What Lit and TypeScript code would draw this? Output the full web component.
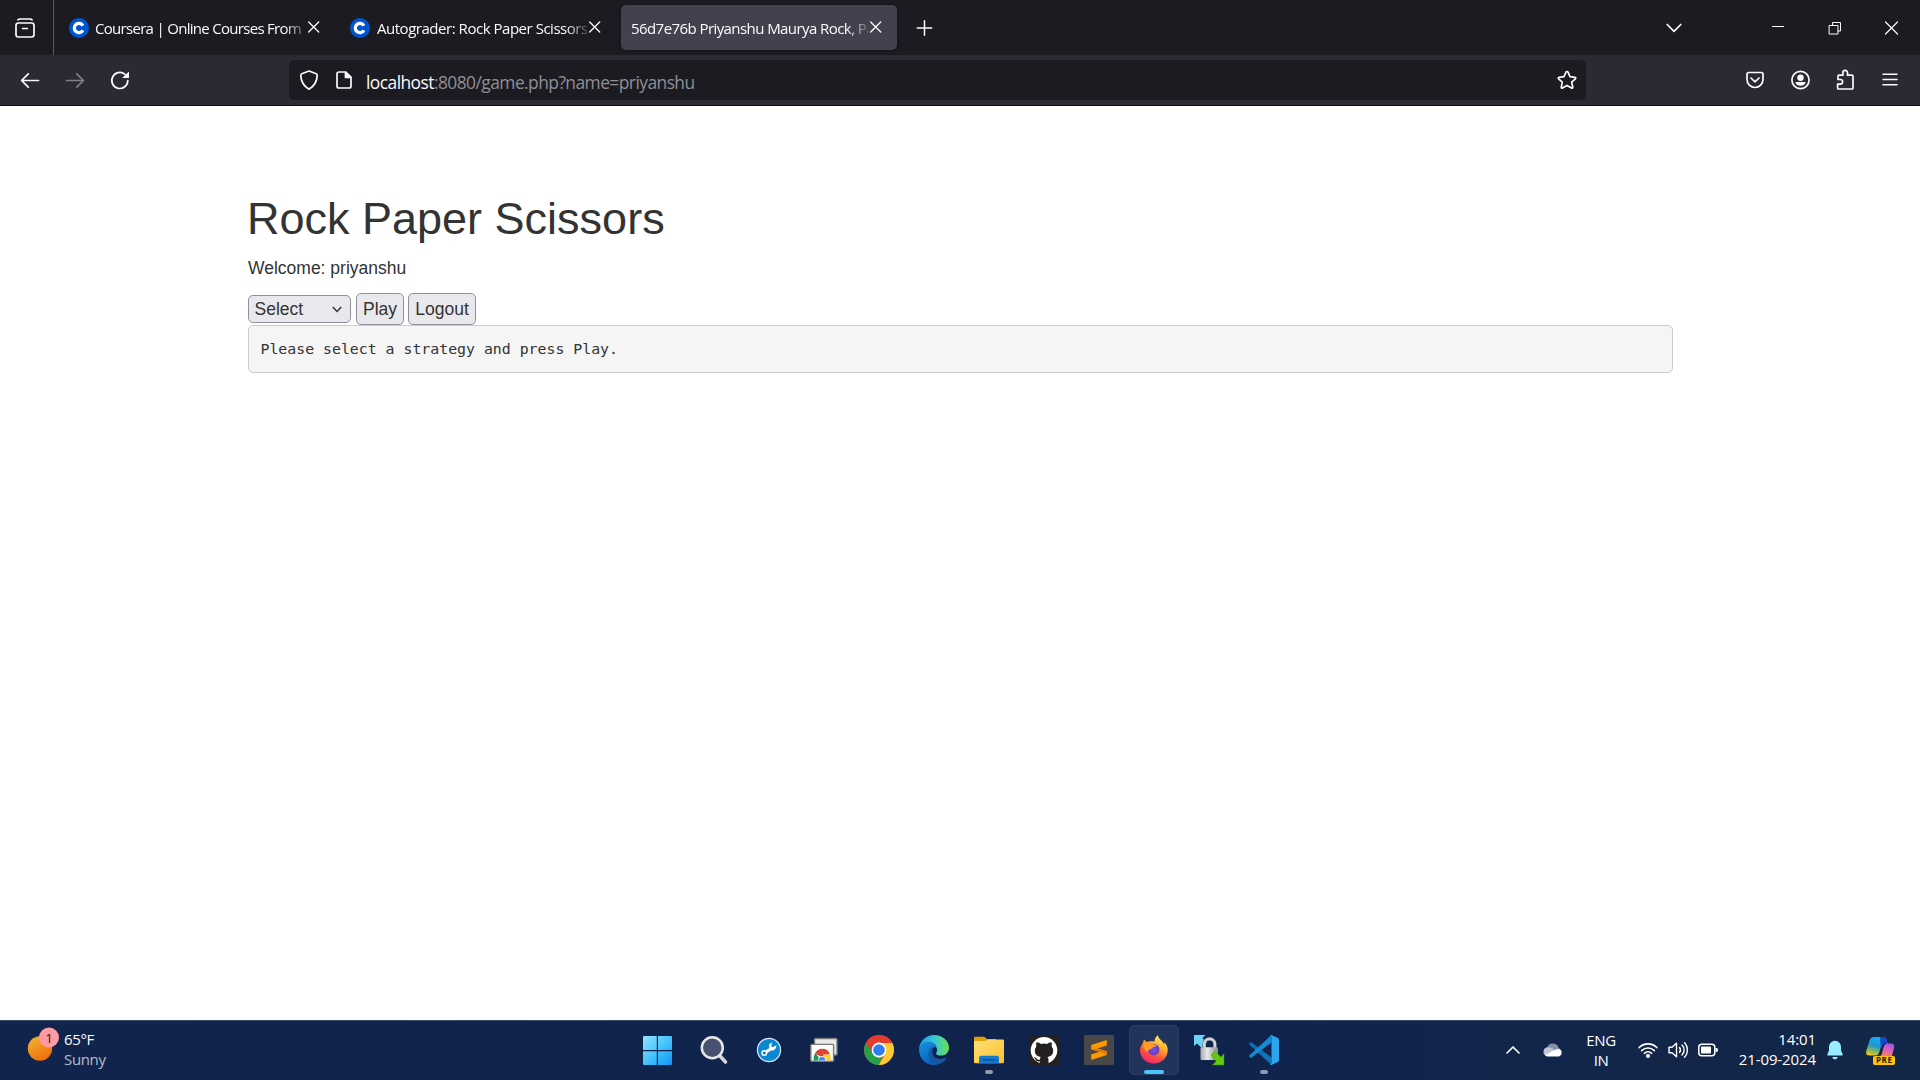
import { LitElement, html, css, svg } from "lit";
import { customElement, property } from "lit/decorators.js";
import { classMap } from "lit/directives/class-map.js";

const line = "#fbfbfe";

/* ---------- small line icons (20 x 20 unless noted) ---------- */
const icons: Record<string, { w: number; h: number; d: unknown }> = {
  view: { w: 20, h: 20, d: svg`<path d="M3 1.8Q3.6 1 5 1H15Q16.400 1 17 1.800" /><rect x="1" y="5" width="18" height="14" rx="2.400" /><path d="M7.600 10.500h4.800" />` },
  close: { w: 12, h: 12, d: svg`<path stroke-width="1.300" d="M.7 1l10 10M10.700 1L.7 11" />` },
  plus: { w: 16, h: 16, d: svg`<path stroke-width="1.500" d="M7.500 .8v14.400M.3 8h14.400" />` },
  down: { w: 16, h: 10, d: svg`<path d="M1.200 1.500L8 8.300l6.800-6.800" />` },
  min: { w: 14, h: 14, d: svg`<path stroke-width="1" stroke-linecap="butt" d="M1 5.500h12" />` },
  restore: { w: 14, h: 14, d: svg`<path stroke-width="1" stroke-linejoin="miter" d="M1.500 4.500h8.500v8.500H1.500zM4.500 4.500V1.500H12.500V10H10" />` },
  winclose: { w: 14, h: 14, d: svg`<path stroke-width="1.200" d="M.5 1l12 12M12.500 1L.5 13" />` },
  back: { w: 20, h: 20, d: svg`<path d="M18.500 9.500H2M8.300 2.800L1.600 9.500l6.700 6.700" />` },
  forward: { w: 20, h: 20, d: svg`<path d="M1.500 9.500H18M11.700 2.800L18.400 9.500l-6.700 6.700" />` },
  reload: { w: 20, h: 20, d: svg`<path d="M17.800 9.500a8 8 0 1 1-2.800-6.100" /><path fill="${line}" stroke="none" d="M19 .5v6.600H12.200z" />` },
  shield: { w: 20, h: 22, d: svg`<path d="M10 2L17.200 4.800Q18.300 5.200 18.200 6.600Q17.900 15.500 10 20.200Q2.100 15.500 1.800 6.600Q1.700 5.200 2.800 4.800Z" />` },
  doc: { w: 18, h: 20, d: svg`<path d="M4 2H10.800L16 7.200V16Q16 18 14 18H4Q2 18 2 16V4Q2 2 4 2z" /><path fill="${line}" d="M10.500 2.500V7.500h5z" />` },
  star: { w: 22, h: 20, d: svg`<path d="M11 1.500q.7 0 1 .7l2 4.500 4.900.6q1.500.3.500 1.500l-3.700 3.300 1 4.900q.2 1.500-1.200.9L11 15.400l-4.500 2.500q-1.400.6-1.200-.9l1-4.900L2.600 8.800q-1-1.200.5-1.500L8 6.700l2-4.500q.3-.7 1-.7z" />` },
  pocket: { w: 20, h: 18, d: svg`<path d="M3.800 1.500H16.200Q18 1.500 18 3.300V8.500a8 8 0 0 1-16 0V3.300Q2 1.500 3.800 1.500z" /><path d="M6 7L10 10.800 14 7" />` },
  account: { w: 20, h: 20, d: svg`<circle cx="10.500" cy="10" r="8.600" /><circle cx="10.500" cy="7.700" r="3.200" fill="${line}" stroke="none" /><path fill="${line}" stroke="none" d="M5.300 11.900H15.700Q15 15.600 10.500 15.700 6 15.600 5.300 11.900z" />` },
  ext: { w: 20, h: 22, d: svg`<path d="M3.500 20H17Q18 20 18 19V7.500Q18 6.200 17 6.200H12.500V3.700a2.300 2.300 0 0 0-4.600 0V6.200H4Q3 6.200 3 7.400V10.500H5.300a2.300 2.300 0 0 1 0 4.600H2.600V19Q2.600 20 3.500 20z" />` },
  menu: { w: 18, h: 14, d: svg`<path stroke-width="1.500" d="M2 1.200h14M2 6.500h14M2 11.800h14" />` },
  up: { w: 14, h: 10, d: svg`<path stroke-width="1.700" d="M1 8L7 2l6 6" />` },
};

const icon = (name: string) => {
  const i = icons[name];
  return html`<svg width=${i.w} height=${i.h} viewBox="0 0 ${i.w} ${i.h}" fill="none" stroke=${line}
    stroke-width="1.700" stroke-linecap="round" stroke-linejoin="round">${i.d}</svg>`;
};

/* ---------- taskbar application icons (30 x 30) ---------- */
const apps: { name: string; state?: string; art: unknown }[] = [
  { name: "start", art: svg`
    <defs><linearGradient id="win" gradientUnits="userSpaceOnUse" x1="0" y1="1" x2="28" y2="30"><stop offset="0" stop-color="#8fe3ff"/><stop offset=".5" stop-color="#45c4fb"/><stop offset="1" stop-color="#0d95f5"/></linearGradient></defs>
    <path fill="url(#win)" d="M0 1H12.800V15H-1V2Q-1 1 0 1zM14 1H27Q28 1 28 2V15H14zM-1 16.200H12.800V30H0Q-1 30-1 29zM14 16.200H28V29Q28 30 27 30H14z"/>` },
  { name: "search", art: svg`
    <path d="M20.500 20.500L26.500 27" stroke="#d5d5d8" stroke-width="3.600" stroke-linecap="round"/>
    <circle cx="13.300" cy="12.700" r="10.500" fill="#46526f" stroke="#e6e6e8" stroke-width="2.500"/>` },
  { name: "tool", art: svg`
    <circle cx="15" cy="15" r="11.600" fill="#0c87d2" stroke="#d9eaf5" stroke-width="1.200"/>
    <path d="M11 17.700L18 13.100" stroke="#fff" stroke-width="3"/>
    <circle cx="10.300" cy="18" r="2.300" fill="#0c87d2" stroke="#fff" stroke-width="1.400"/>
    <path d="M22.300 10.300l-3.500 2-1.600-1.400.8-3.300c-2.400.6-3.600 2.700-2.700 4.800l1.700 3.100c3 .7 5.600-1.700 5.300-5.200z" fill="#fff"/>` },
  { name: "remote", art: svg`
    <rect x="5.500" y="3.500" width="22.500" height="16.500" rx="1" fill="#e9e9e9" stroke="#777" stroke-width="1.400"/>
    <rect x="1.800" y="9.400" width="22.800" height="16.800" rx="1" fill="#fafafa" stroke="#777" stroke-width="1.400"/>
    <path fill="#db4437" d="M6 18.800a8 8 0 0 1 14.800 0L13 22z"/>
    <path fill="#0f9d58" d="M6.300 18.300a8.500 8.500 0 0 0-1.300 7.200h6L9.500 22z"/>
    <path fill="#ffcd40" d="M14 19.300h6.800a8.500 8.500 0 0 1 1 6.200H15z"/>
    <path fill="#fff" d="M8.800 25.500a4.200 4.200 0 1 1 8.400 0z"/><path fill="#4285f4" d="M9.600 25.500a3.400 3.400 0 1 1 6.800 0z"/>` },
  { name: "chrome", art: svg`
    <circle cx="15" cy="15" r="15" fill="#e33b2e"/>
    <path fill="#fcc934" d="M15 8H28.300A15 15 0 0 1 14.800 30L21.200 18.500z"/>
    <path fill="#25a04b" d="M2 7.600L8.800 18.400Q11 22 15 22q2 0 3.800-1L14.800 30A15 15 0 0 1 2 7.600z"/>
    <path fill="#e33b2e" d="M2 7.600A15 15 0 0 1 28.300 8H15L8.500 18z"/>
    <circle cx="15" cy="15" r="7.400" fill="#fff"/><circle cx="15" cy="15" r="5.800" fill="#2f7df1"/>` },
  { name: "edge", art: svg`
    <defs>
      <linearGradient id="ea" x1="0" y1=".3" x2="1" y2=".3"><stop offset="0" stop-color="#2198dc"/><stop offset=".5" stop-color="#36c4dc"/><stop offset="1" stop-color="#6be04e"/></linearGradient>
      <linearGradient id="eb" x1="0" y1="0" x2=".6" y2="1"><stop offset="0" stop-color="#1696e2"/><stop offset="1" stop-color="#0a5cb4"/></linearGradient>
    </defs>
    <path fill="url(#ea)" d="M0 13.500C1 5.500 7.200 0 15 0c8.500 0 15 6 15 12.700 0 4.800-3.500 7.900-7.900 7.900-3.500 0-5.400-1.200-4.900-2.600 1.300-1.700 1.500-4.300-.7-7C12 6 2 8 0 13.500z"/>
    <path fill="url(#eb)" d="M0 14C.8 9.200 4.700 6.700 9.400 6.700c4.300 0 7.400 2.200 8.300 5.200C14.500 11.500 12 14 12 17.500c0 5.500 3 9.500 7 11.900C9 32 0 25.300 0 14z"/>
    <path fill="#1558a4" d="M14.500 12.200C10.600 13 9 16.300 9.600 20c.8 5 4.700 9.300 9.400 9.300 4-.9 7-3.100 8.700-6.100.3-.6-.3-.9-.8-.6-6.700 3.400-13.400.6-13.400-5.600 0-2 .4-3.700 1-4.800z"/>` },
  { name: "files", state: "open", art: svg`
    <defs><linearGradient id="fo" x1="0" y1="0" x2="1" y2="1"><stop offset="0" stop-color="#ffe07a"/><stop offset="1" stop-color="#fdbf2c"/></linearGradient></defs>
    <path fill="#e0a00c" d="M1 1.800H10.200L13 4H22V12H0V2.800Q0 1.800 1 1.800z"/>
    <path fill="url(#fo)" d="M0 6H10.500Q12 6 13 5.200T15 4.400H29Q30 4.400 30 5.400V27Q30 28.300 28.700 28.300H1.300Q0 28.300 0 27z"/>
    <path fill="#1478ce" d="M5 28.300V23Q5 20.700 7.300 20.700H22.700Q25 20.700 25 23V28.300z"/><path d="M9 24.800h12" stroke="#0b4b8c" stroke-width="1.300" stroke-linecap="round"/>` },
  { name: "github", art: svg`
    <path fill="#24201f" d="M0 0H30V30H0z"/><circle cx="15" cy="15.300" r="13.300" fill="#fff"/>
    <path fill="#24201f" d="M7.500 7.300Q10 7.200 12 8.900q3-.7 6 0Q20 7.200 22.500 7.300q.8 2.300.2 4.100 1.500 1.700 1.500 4.300 0 5.200-5.700 6.300 1 1.100 1 3V29.500H10.700V26.300Q7.600 27 6.300 24.200 5.500 22.800 4.600 22.300 6 21.700 7.200 23.200 8.800 25.500 10.900 24.500 11 22.800 11.700 22 5.800 21 5.800 15.700 5.800 13 7.300 11.400 6.700 9.500 7.500 7.300z"/>` },
  { name: "sublime", art: svg`
    <rect width="30" height="30" rx="1.500" fill="#484848"/>
    <path fill="#ff9800" d="M7.200 10.100L22.800 5V10.500L13.500 13.400 22.800 16.200V20L7.200 25V19.500L15.600 16.800 7.200 14.500z"/><path fill="#df7b05" d="M7.200 14.300L15.600 16.800 22.800 19.600 22.500 16.100 13.500 13.400z"/>` },
  { name: "firefox", state: "active", art: svg`
    <defs>
      <linearGradient id="fa" x1=".8" y1="0" x2=".3" y2="1"><stop offset="0" stop-color="#fff36a"/><stop offset=".35" stop-color="#ffb52d"/><stop offset=".68" stop-color="#ff533e"/><stop offset="1" stop-color="#e92474"/></linearGradient>
      <radialGradient id="fp"><stop offset="0" stop-color="#7351e6"/><stop offset="1" stop-color="#6a3bbd"/></radialGradient>
    </defs>
    <path fill="url(#fa)" d="M1 16C1 12.500 2.600 9.500 4 8 4 6.500 4.600 5.200 5.500 4.500 6 6 7 7 8 7.100 9.500 6 12 6.200 15.500 6.500 15.500 4 17 1.300 19 .3 19.300 3 21 4.300 23 6.300 24 7.200 24.500 8.500 25 9.700 25.500 8.900 25.300 7.900 24.900 6.900 28 9.500 29 12.400 28.700 16 28.100 23.500 22 28.500 15 28.500S1.600 24 1 16z"/>
    <circle cx="14.700" cy="14.600" r="5.800" fill="url(#fp)"/>
    <path fill="#ff9a29" d="M4.300 9.300Q9 6 12.600 7.800L14.600 9.600 18 9.900Q16.700 11.900 13.500 12.400 12.900 13.700 11 14.300 8.700 15 9.100 17.200 4.300 15.500 4.300 9.300z"/>` },
  { name: "winscp", art: svg`
    <path fill="#6fd3f5" d="M0 0H11.500L8.400 3.100 13 7.600 7.600 13 3.100 8.400 0 11z"/>
    <path d="M10.300 13V9.200a5.300 5.300 0 0 1 10.600 0V13" fill="none" stroke="#555e6c" stroke-width="3.800"/>
    <path d="M10.300 13V9.200a5.300 5.300 0 0 1 10.600 0V13" fill="none" stroke="#d5d6d8" stroke-width="2.600"/>
    <defs><linearGradient id="lk"><stop offset="0" stop-color="#a8aaad"/><stop offset=".4" stop-color="#e9e9e9"/><stop offset="1" stop-color="#85878a"/></linearGradient></defs>
    <rect x="6.500" y="12.300" width="17.500" height="12.700" rx="1.200" fill="url(#lk)"/>
    <path fill="#63c90d" stroke="#3a9208" stroke-width=".5" d="M17 20L21 16 26.800 22 30 18.800V30H18.500L22 26.500z"/>` },
  { name: "vscode", state: "open", art: svg`
    <path fill="#0d72b9" d="M2.600 7.400L22.500 22.500V30L.5 9.800Q-.3 9 .5 8.300L1.300 7.500Q2 7 2.600 7.400z"/>
    <path fill="#168bd0" d="M2.600 22.600L22.500 7.500V0L.5 20.200Q-.3 21 .5 21.700L1.300 22.500Q2 23 2.600 22.600z"/>
    <path fill="#2ba6ef" d="M22.400 0L28.800 3Q30 3.700 30 5V25Q30 26.300 28.800 27L22.400 30Q21.500 30 20.800 29.200 22.500 29.500 22.500 27.800V2.200Q22.500.5 20.800.8 21.500 0 22.400 0z"/>` },
];

@customElement("browser-tab")
class BrowserTab extends LitElement {
  @property() label = "";
  @property({ type: Boolean }) favicon = false;
  @property({ type: Boolean, reflect: true }) active = false;
  @property({ type: Boolean, reflect: true }) tight = false;
  static styles = css`
    :host { display: flex; box-sizing: border-box; width: 276px; height: 45px; padding: 0 14px 0 10px; align-items: center; border-radius: 5px; color: #fbfbfe; font: 15px/20px "Open Sans", sans-serif; letter-spacing: -0.47px; }
    :host([active]) { background: #42414d; box-shadow: 0 0 4px rgba(0, 0, 0, 0.4); letter-spacing: -0.57px; }
    :host([tight]) { letter-spacing: -0.7px; }
    svg { display: block; flex: none; }
    .fav { margin-right: 7px; }
    :host([tight]) .fav { margin-right: 6px; }
    .label { flex: 1; overflow: hidden; white-space: nowrap; padding-top: 1px; mask-image: linear-gradient(90deg, #000 calc(100% - 22px), transparent calc(100% + 6px)); }
    .x { margin: 0 0 1px 2px; padding-right: 1px; }
  `;
  render() {
    return html`
      ${this.favicon ? html`<svg class="fav" width="20" height="20" viewBox="0 0 20 20"><circle cx="10" cy="10" r="10" fill="#0056d2" /><path d="M13.900 12.300A4.600 4.600 0 1 1 13.900 7.700" fill="none" stroke="#fff" stroke-width="3.300" /></svg>` : ""}
      <span class="label">${this.label}</span>
      <span class="x">${icon("close")}</span>`;
  }
}

@customElement("app-root")
class AppRoot extends LitElement {
  static styles = css`
    :host { display: flex; flex-direction: column; width: 1920px; height: 1080px; overflow: hidden; background: #fff; font-family: "Open Sans", sans-serif; }
    * { box-sizing: border-box; }
    svg { display: block; flex: none; overflow: visible; }

    .tabs { display: flex; align-items: center; height: 55px; flex: none; background: #1c1b22; }
    .view { display: flex; width: 54px; height: 55px; padding: 18px 0 0 15px; border-right: 1px solid #5b5a61; margin-right: 5px; }
    .strip { display: flex; gap: 5px; margin-right: 20px; }
    .grow { flex: 1; }
    .wm { display: flex; align-items: center; padding-right: 21px; }
    .wm .list { margin-right: 89px; }
    .wm .mid { margin: 0 43px; }

    .bar { display: flex; align-items: center; height: 51px; flex: none; background: #2b2a33; border-bottom: 1px solid #0c0c0d; }
    .nav { display: flex; gap: 25px; padding: 1px 0 0 20px; width: 289px; }
    .dim { opacity: 0.4; }
    .url { display: flex; align-items: center; width: 1297px; height: 40px; padding: 0 8px 0 10px; border-radius: 5px; background: #1c1b22; }
    .url .doc { margin: 0 13px 0 16px; }
    .addr { flex: 1; padding-top: 3px; font-size: 17.400px; line-height: 24px; letter-spacing: -0.55px; color: #8f8f94; white-space: nowrap; }
    .addr b { font-weight: 400; color: #fbfbfe; }
    .tools { display: flex; flex: 1; align-items: center; justify-content: flex-end; gap: 25px; padding-right: 21px; }
    .tools .ext { margin-right: 1px; }

    .page { flex: 1; padding: 88px 247px 0 248px; background: #fff; font: 17.5px/25px "Liberation Sans", Arial, sans-serif; color: #333; }
    h1 { margin: 0 0 12.500px -1px; font-size: 45px; line-height: 49.500px; font-weight: 400; }
    p { margin: 0; height: 37px; }
    .form { display: flex; align-items: center; height: 32px; }
    .select, .btn { display: flex; align-items: center; border: 1px solid #8f8f9d; border-radius: 5px; background: #e9e9ed; }
    .select { width: 103px; height: 28px; padding: 0 8px 0 5.500px; justify-content: space-between; margin-right: 5px; }
    .btn { height: 32px; padding: 1px 0 0; justify-content: center; }
    .play { width: 48px; margin-right: 4px; }
    .logout { width: 68px; }
    pre { margin: 0; height: 48px; padding: 11px 11.500px; border: 1px solid #ccc; border-radius: 5px; background: #f5f5f5; font: 14.850px/25px "DejaVu Sans Mono", monospace; color: #333; }

    .task { display: flex; flex: none; height: 60px; border-top: 1px solid #3a4a6b; background: linear-gradient(90deg, #10244e, #10234d 60%, #132748); color: #fff; font-size: 15px; line-height: 20px; }
    .weather { display: flex; width: 644px; padding: 7px 0 0 28px; gap: 5px; }
    .two { display: flex; flex-direction: column; white-space: nowrap; padding-top: 1px; letter-spacing: -0.35px; }
    .soft { color: #b7bdcb; }
    .apps { display: flex; gap: 25px; height: 57px; align-items: center; }
    .app { position: relative; display: flex; width: 30px; height: 50px; align-items: center; justify-content: center; }
    .active::before { content: ""; position: absolute; inset: 0 -10px; border-radius: 5px; background: #22345c; border: 1px solid #2c3d64; }
    .app svg { position: relative; }
    .active::after, .open::after { content: ""; position: absolute; left: 11px; bottom: 1px; width: 8px; height: 4px; border-radius: 2px; background: #8f98ad; }
    .active::after { left: 5px; width: 20px; background: #4cc2ff; }
    .tray { display: flex; flex: 1; height: 57px; align-items: center; justify-content: flex-end; padding-right: 25px; }
    .lang { width: 30px; align-items: center; letter-spacing: -0.4px; margin: 0 22px 0 23px; padding-top: 0; }
    .clock { align-items: flex-end; width: 81px; margin: 0 11px 0 17px; padding: 0 0 2px; letter-spacing: -0.1px; }
    .gap23 { margin-right: 23px; }
    .gap10 { margin-right: 10px; }
    .copilot { margin-left: 23px; }
  `;

  render() {
    return html`
      <div class="tabs">
        <div class="view">${icon("view")}</div>
        <div class="strip">
          <browser-tab favicon tight label="Coursera | Online Courses From"></browser-tab>
          <browser-tab favicon label="Autograder: Rock Paper Scissors"></browser-tab>
          <browser-tab active label="56d7e76b Priyanshu Maurya Rock, Pa"></browser-tab>
        </div>
        ${icon("plus")}
        <div class="grow"></div>
        <div class="wm">
          <span class="list">${icon("down")}</span>${icon("min")}<span class="mid">${icon("restore")}</span>${icon("winclose")}
        </div>
      </div>

      <div class="bar">
        <div class="nav">${icon("back")}<span class="dim">${icon("forward")}</span>${icon("reload")}</div>
        <div class="url">
          ${icon("shield")}<span class="doc">${icon("doc")}</span>
          <span class="addr"><b>localhost</b>:8080/game.php?name=priyanshu</span>
          ${icon("star")}
        </div>
        <div class="tools">${icon("pocket")}${icon("account")}<span class="ext">${icon("ext")}</span>${icon("menu")}</div>
      </div>

      <div class="page">
        <h1>Rock Paper Scissors</h1>
        <p>Welcome: priyanshu</p>
        <div class="form">
          <div class="select">Select<svg width="10" height="7" viewBox="0 0 10 7"><path d="M.8 1L5 5.500 9.200 1" fill="none" stroke="#333" stroke-width="1.500" /></svg></div>
          <div class="btn play">Play</div>
          <div class="btn logout">Logout</div>
        </div>
        <pre>Please select a strategy and press Play.</pre>
      </div>

      <div class="task">
        <div class="weather">
          <svg width="31" height="34" viewBox="0 0 31 34">
            <defs><linearGradient id="sun" x1=".2" y1="0" x2=".7" y2="1"><stop offset="0" stop-color="#eeb52d" /><stop offset="1" stop-color="#f0690e" /></linearGradient></defs>
            <circle cx="12" cy="20.500" r="12.200" fill="url(#sun)" /><circle cx="21" cy="9.500" r="10" fill="#ff99a4" />
            <text x="21" y="14.500" text-anchor="middle" font-size="13.500" fill="#1b1b1b">1</text>
          </svg>
          <div class="two"><span>65°F</span><span class="soft">Sunny</span></div>
        </div>
        <div class="apps">
          ${apps.map((a) => html`<div class=${classMap({ app: true, open: a.state === "open", active: a.state === "active" })}><svg width="30" height="30" viewBox="0 0 30 30" fill="none">${a.art}</svg></div>`)}
        </div>
        <div class="tray">
          <span class="gap23">${icon("up")}</span>
          <svg width="20" height="14" viewBox="0 0 20 14"><path fill="#858fa5" d="M4 5A6 6 0 0 1 15.500 4.500L18 7 9 9 2 7z" /><path fill="#bec4d0" d="M4.500 4.300Q7 4 9 5.300L13.500 8 4 13A4.400 4.400 0 0 1 4.500 4.300z" /><path fill="#fff" d="M2 12L12.500 6.800Q14 5.600 16.300 6A4 4 0 0 1 16 13.500H5Q3 13.500 2 12z" /></svg>
          <div class="two lang"><span>ENG</span><span>IN</span></div>
          <svg class="gap10" width="20" height="16" viewBox="0 0 20 16" fill="none" stroke="#fff" stroke-width="1.600" stroke-linecap="round"><path d="M1 5.700a12.500 12.500 0 0 1 18 0M3.700 8.600a8.800 8.800 0 0 1 12.600 0M6.400 11.300a5.200 5.200 0 0 1 7.200 0" /><circle cx="10" cy="14" r="1.200" fill="#fff" /></svg>
          <svg class="gap10" width="20" height="18" viewBox="0 0 20 18" fill="none" stroke="#fff" stroke-width="1.400" stroke-linecap="round" stroke-linejoin="round"><path d="M1 6.300H4L8.500 2.300V15.700L4 11.700H1z" /><path d="M11.500 6.500a4 4 0 0 1 0 5M14 4a7 7 0 0 1 0 10M16.600 1.800a10.500 10.500 0 0 1 0 14.400" /></svg>
          <svg width="20" height="14" viewBox="0 0 20 14"><rect x=".8" y="1.200" width="16" height="11.600" rx="3" fill="none" stroke="#fff" stroke-width="1.500" /><rect x="3" y="3.400" width="10" height="7.200" rx=".8" fill="#fff" /><path fill="#fff" d="M17.500 5H18.500Q20 5 20 7T18.500 9H17.500z" /></svg>
          <div class="two clock"><span>14:01</span><span>21-09-2024</span></div>
          <svg width="16" height="20" viewBox="0 0 16 20" fill="#99ebff"><path d="M8 .8a6 6 0 0 1 6 6V10.500L15.800 14.500Q16 15.600 15 15.600H1Q0 15.600.2 14.500L2 10.500V6.800a6 6 0 0 1 6-6zM5.200 17H10.800Q10.300 19.400 8 19.400T5.200 17z" /></svg>
          <svg class="copilot" width="29" height="30" viewBox="0 0 29 30">
            <defs>
              <linearGradient id="ca" x1=".6" y1="0" x2=".3" y2="1"><stop offset="0" stop-color="#18aef5" /><stop offset=".45" stop-color="#2094d5" /><stop offset=".75" stop-color="#7dba5c" /><stop offset="1" stop-color="#f3c51c" /></linearGradient>
              <linearGradient id="cb" x1=".6" y1="0" x2=".3" y2="1"><stop offset="0" stop-color="#a757ec" /><stop offset=".5" stop-color="#dd61b5" /><stop offset="1" stop-color="#ff7f62" /></linearGradient>
            </defs>
            <path fill="url(#ca)" d="M8 2H18L13 18Q12.300 20.500 9.500 20.500H3.500Q-.7 20.500.3 16L3.500 5.500Q4.600 2 8 2z" />
            <path fill="#1748c8" d="M14 2H17.500Q20 2 21 5L22 8.500H19Q17 8.500 16.300 11L15 15z" />
            <path fill="url(#cb)" d="M20 8.500H25Q29 8.500 28 13L26 21H12.500Q14.500 21 15.500 18L17 12Q18 8.500 20 8.500z" />
            <path stroke="#132748" stroke-width="1.200" fill="none" d="M20 8.500Q18 8.500 17 12L15.500 18Q14.800 20.300 13.500 21" />
            <rect x="7" y="21" width="22" height="9" rx="1.800" fill="#ffc20a" />
            <text x="18.300" y="28.400" text-anchor="middle" font-size="8" font-weight="700" letter-spacing=".6" fill="#1b1b1b">PRE</text>
          </svg>
        </div>
      </div>`;
  }
}
